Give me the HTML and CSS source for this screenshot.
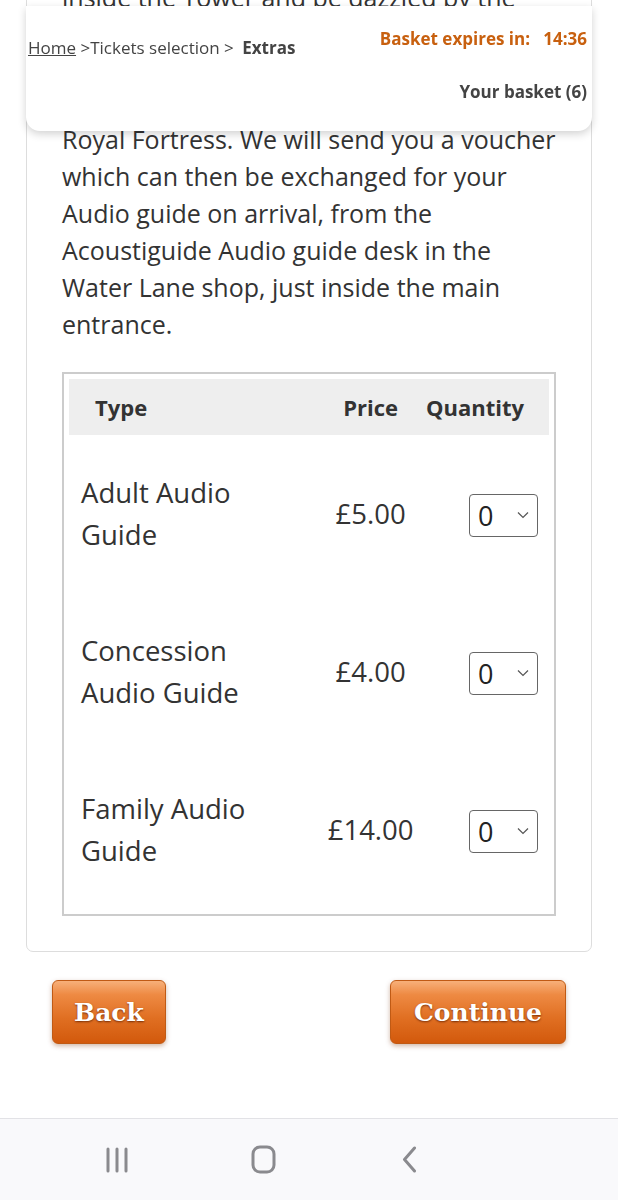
FILE: index.html
```html
<!DOCTYPE html>
<html lang="en">
<head>
    <meta charset="UTF-8">
    <meta name="viewport" content="width=device-width, initial-scale=1.0">
    <title>Extras - Tickets</title>
    <link rel="stylesheet" href="styles.css">
</head>
<body>

    <!-- Sticky booking header -->
    <header class="booking-bar">
        <nav class="crumbs">
            <a href="#">Home</a> &gt;Tickets selection &gt; <strong>Extras</strong>
        </nav>
        <div class="basket">
            <div class="expires">Basket expires in:&nbsp;&nbsp; 14:36</div>
            <div class="basket-count">Your basket (6)</div>
        </div>
    </header>

    <!-- Extras card -->
    <main class="card">
        <p class="intro intro-top">inside the Tower and be dazzled by the</p>
        <p class="intro">Royal Fortress. We will send you a voucher which can then be exchanged for your Audio guide on arrival, from the Acoustiguide Audio guide desk in the Water Lane shop, just inside the main entrance.</p>

        <div class="extras">
            <table class="extras-table">
                <colgroup>
                    <col class="w-type">
                    <col class="w-price">
                    <col class="w-qty">
                </colgroup>
                <thead>
                    <tr>
                        <th class="col-type">Type</th>
                        <th class="col-price">Price</th>
                        <th class="col-qty">Quantity</th>
                    </tr>
                </thead>
                <tbody>
                    <tr>
                        <td class="col-type">Adult Audio Guide</td>
                        <td class="col-price">£5.00</td>
                        <td class="col-qty">
                            <span class="qty">
                                <select><option>0</option><option>1</option><option>2</option></select>
                                <svg class="chev" width="12" height="8" viewBox="0 0 12 8"><path d="M1 1.5 L6 6.5 L11 1.5" fill="none" stroke="#555" stroke-width="1.2"/></svg>
                            </span>
                        </td>
                    </tr>
                    <tr>
                        <td class="col-type">Concession Audio Guide</td>
                        <td class="col-price">£4.00</td>
                        <td class="col-qty">
                            <span class="qty">
                                <select><option>0</option><option>1</option><option>2</option></select>
                                <svg class="chev" width="12" height="8" viewBox="0 0 12 8"><path d="M1 1.5 L6 6.5 L11 1.5" fill="none" stroke="#555" stroke-width="1.2"/></svg>
                            </span>
                        </td>
                    </tr>
                    <tr>
                        <td class="col-type">Family Audio Guide</td>
                        <td class="col-price">£14.00</td>
                        <td class="col-qty">
                            <span class="qty">
                                <select><option>0</option><option>1</option><option>2</option></select>
                                <svg class="chev" width="12" height="8" viewBox="0 0 12 8"><path d="M1 1.5 L6 6.5 L11 1.5" fill="none" stroke="#555" stroke-width="1.2"/></svg>
                            </span>
                        </td>
                    </tr>
                </tbody>
            </table>
        </div>
    </main>

    <!-- Navigation buttons -->
    <div class="actions">
        <button class="btn">Back</button>
        <button class="btn">Continue</button>
    </div>

    <!-- Phone navigation bar -->
    <footer class="system-bar">
        <svg width="22" height="26" viewBox="0 0 22 26">
            <path d="M2 2 V24 M11 2 V24 M20 2 V24" stroke="#8a8a8e" stroke-width="3" stroke-linecap="round"/>
        </svg>
        <svg width="25" height="29" viewBox="0 0 25 29">
            <rect x="2" y="2" width="21" height="25" rx="7" fill="none" stroke="#8a8a8e" stroke-width="3"/>
        </svg>
        <svg width="15" height="27" viewBox="0 0 15 27">
            <path d="M12.5 2 L2.5 13.5 L12.5 25" fill="none" stroke="#8a8a8e" stroke-width="3" stroke-linecap="round" stroke-linejoin="round"/>
        </svg>
    </footer>

</body>
</html>
```

FILE: styles.css
```css
/* Base */
body {
    margin: 0;
    font-family: "Open Sans", "Liberation Sans", sans-serif;
    color: #333;
    background: #fff;
    min-height: 1200px;
    display: flex;
    flex-direction: column;
}

/* Booking header, stays on top while scrolling */
.booking-bar {
    position: fixed;
    top: 6px;
    left: 26px;
    right: 26px;
    height: 125px;
    box-sizing: border-box;
    padding: 21px 5px 0 2px;
    background: #fff;
    border-radius: 0 0 14px 14px;
    box-shadow: 0 3px 9px rgba(0, 0, 0, 0.18);
    display: flex;
    justify-content: space-between;
    align-items: flex-start;
    font-size: 17px;
    line-height: 23px;
    color: #444;
    z-index: 10;
}

.crumbs {
    margin-top: 9px;
}

.crumbs a {
    color: #444;
    text-decoration: underline;
}

.crumbs strong {
    margin-left: 4px;
}

.basket {
    text-align: right;
    font-weight: bold;
}

.expires {
    color: #c8600f;
}

.basket-count {
    margin-top: 30px;
}

/* Card */
.card {
    margin: -40px 26px 0;
    padding: 18px 35px 35px;
    border: 1px solid #ddd;
    border-radius: 0 0 7px 7px;
}

.intro {
    margin: 0;
    max-width: 500px;
    font-size: 25px;
    line-height: 37px;
}

.intro-top {
    margin-bottom: 105px;
}

.intro + .intro {
    margin-bottom: 29px;
}

/* Extras table */
.extras {
    border: 2px solid #ccc;
    padding: 5px;
}

.extras-table {
    width: 100%;
    table-layout: fixed;
    border-collapse: collapse;
}

.w-type {
    width: 251px;
}

.w-price {
    width: 100px;
}

.w-qty {
    width: 128px;
}

.extras-table th {
    background: #eee;
    height: 56px;
    padding: 0;
    font-size: 22px;
    font-weight: bold;
    color: #333;
}

.extras-table td {
    height: 158px;
    padding: 0;
    font-size: 27.5px;
    line-height: 42px;
}

th.col-type {
    text-align: left;
    padding-left: 26px;
}

td.col-type {
    padding-left: 12px;
    padding-right: 40px;
}

.col-price {
    text-align: center;
}

th.col-qty {
    text-align: right;
    padding-right: 25px;
}

td.col-qty {
    text-align: right;
    padding-right: 11px;
}

/* Quantity select */
.qty {
    position: relative;
    display: inline-block;
    vertical-align: middle;
}

.qty select {
    appearance: none;
    -webkit-appearance: none;
    width: 69px;
    height: 43px;
    padding: 0 0 0 8px;
    border: 1px solid #666;
    border-radius: 4px;
    background: #fff;
    font-family: "Open Sans", sans-serif;
    font-size: 27px;
    color: #222;
    display: block;
}

.chev {
    position: absolute;
    right: 9px;
    top: 17px;
    pointer-events: none;
}

/* Buttons */
.actions {
    display: flex;
    justify-content: space-between;
    padding: 28px 52px 0;
}

.btn {
    height: 64px;
    padding: 0 21px;
    font-family: "DejaVu Serif", "Liberation Serif", serif;
    font-size: 25px;
    font-weight: bold;
    color: #fff;
    text-shadow: 0 1px 2px rgba(90, 30, 0, 0.8);
    background: linear-gradient(to bottom, #f7b07a 0%, #ee8a43 22%, #e06f22 60%, #d2590c 100%);
    border: 1px solid #c05a14;
    border-radius: 6px;
    box-shadow: 0 2px 5px rgba(120, 50, 0, 0.35);
    cursor: pointer;
}

.btn + .btn {
    padding: 0 23px;
}

/* Phone navigation bar */
.system-bar {
    margin-top: auto;
    height: 81px;
    border-top: 1px solid #e2e2e6;
    background: #f9f9fb;
    display: grid;
    grid-template-columns: repeat(3, 146px);
    justify-items: center;
    align-items: center;
    padding-left: 44px;
}
```
